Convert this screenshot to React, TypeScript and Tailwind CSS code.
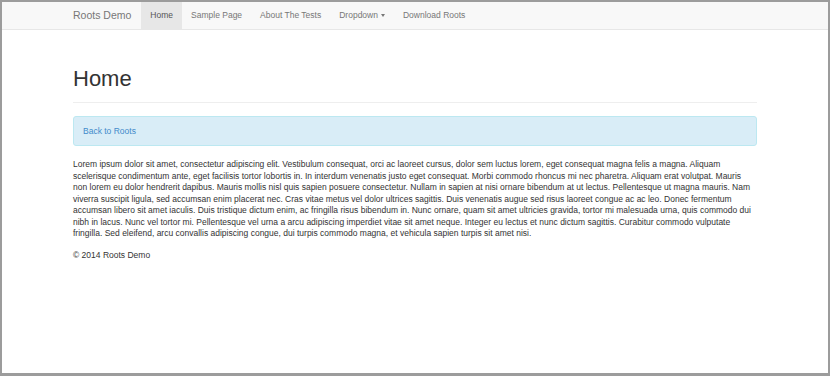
import React from "react";

const navItems = ["Sample Page", "About The Tests"];

// the reference wraps at these points
const loremLines = [
  "Lorem ipsum dolor sit amet, consectetur adipiscing elit. Vestibulum consequat, orci ac laoreet cursus, dolor sem luctus lorem, eget consequat magna felis a magna. Aliquam",
  "scelerisque condimentum ante, eget facilisis tortor lobortis in. In interdum venenatis justo eget consequat. Morbi commodo rhoncus mi nec pharetra. Aliquam erat volutpat. Mauris",
  "non lorem eu dolor hendrerit dapibus. Mauris mollis nisl quis sapien posuere consectetur. Nullam in sapien at nisi ornare bibendum at ut lectus. Pellentesque ut magna mauris. Nam",
  "viverra suscipit ligula, sed accumsan enim placerat nec. Cras vitae metus vel dolor ultrices sagittis. Duis venenatis augue sed risus laoreet congue ac ac leo. Donec fermentum",
  "accumsan libero sit amet iaculis. Duis tristique dictum enim, ac fringilla risus bibendum in. Nunc ornare, quam sit amet ultricies gravida, tortor mi malesuada urna, quis commodo dui",
  "nibh in lacus. Nunc vel tortor mi. Pellentesque vel urna a arcu adipiscing imperdiet vitae sit amet neque. Integer eu lectus et nunc dictum sagittis. Curabitur commodo vulputate",
  "fringilla. Sed eleifend, arcu convallis adipiscing congue, dui turpis commodo magna, et vehicula sapien turpis sit amet nisi.",
];

const App = () => {
  return (
    <div className="w-[830px] h-[376px] border-2 border-b-[3px] border-[#9c9c9c] bg-white overflow-hidden text-[#333] [font-family:'Liberation_Sans',Arial,sans-serif]">
      <header className="h-[28px] bg-[#f8f8f8] border-b border-[#e7e7e7]">
        <div className="w-[684px] mx-auto h-full flex items-stretch">
          <a className="flex items-center pr-[10px] text-[10.5px] text-[#777]">Roots Demo</a>
          <nav className="flex items-stretch text-[8.5px]">
            <a className="flex items-center px-[9px] bg-[#e7e7e7] text-[#555]">Home</a>
            {navItems.map((item) => (
              <a key={item} className="flex items-center px-[9px] text-[#777]">
                {item}
              </a>
            ))}
            <a className="flex items-center gap-[3px] px-[9px] text-[#777]">
              Dropdown
              <span className="w-0 h-0 border-x-[2.5px] border-x-transparent border-t-[3px] border-t-[#777]"></span>
            </a>
            <a className="flex items-center px-[9px] text-[#777]">Download Roots</a>
          </nav>
        </div>
      </header>

      <main className="w-[684px] mx-auto">
        <div className="mt-[37px] pb-[11px] border-b border-[#eee]">
          <h1 className="text-[22px] leading-[24px] text-[#333]">Home</h1>
        </div>
        <div className="mt-[13px] h-[30px] flex items-center px-[9px] bg-[#d9edf7] border border-[#bce8f1] rounded-[3px]">
          <a className="text-[8.5px] text-[#428bca]">Back to Roots</a>
        </div>
        <p className="mt-[13px] text-[8.5px] leading-[11.5px] whitespace-nowrap">
          {loremLines.map((line) => (
            <span key={line} className="block">
              {line}
            </span>
          ))}
        </p>
        <footer className="mt-[10px] text-[8.5px] leading-[11.5px]">© 2014 Roots Demo</footer>
      </main>
    </div>
  );
};

export default App;
